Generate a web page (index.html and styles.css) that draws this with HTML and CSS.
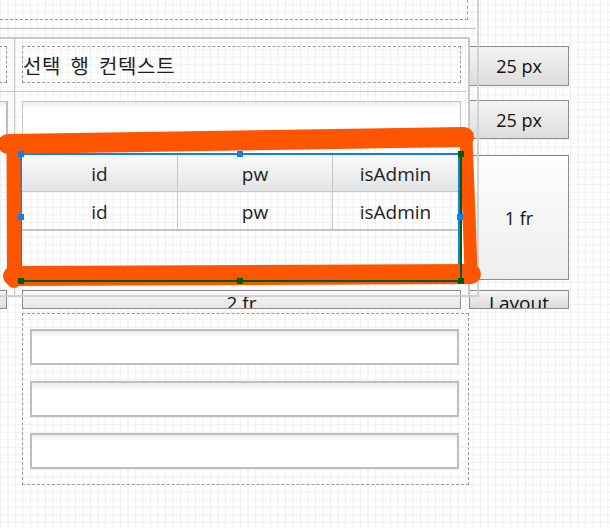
FILE: index.html
```html
<!DOCTYPE html>
<html lang="ko">
<head>
<meta charset="utf-8">
<title>Grid designer</title>
<link rel="stylesheet" href="styles.css">
</head>
<body>
<div class="canvas">
  <div class="layout">
    <div class="top-dashed"></div>

    <div class="left-dashed r3"></div>
    <div class="caption r3">선택 행 컨텍스트</div>
    <div class="btn size-btn r3">25 px</div>

    <div class="left-textbox r5"></div>
    <div class="textbox wide r5"></div>
    <div class="btn size-btn r5">25 px</div>

    <div class="datagrid r7">
      <div class="dg-row dg-head">
        <div class="dg-cell c1">id</div>
        <div class="dg-cell c2">pw</div>
        <div class="dg-cell c3">isAdmin</div>
      </div>
      <div class="dg-row dg-body">
        <div class="dg-cell c1">id</div>
        <div class="dg-cell c2">pw</div>
        <div class="dg-cell c3">isAdmin</div>
      </div>
    </div>
    <div class="btn fr-btn r7">1 fr</div>

    <div class="btn left-btn r9"></div>
    <div class="btn bar-btn wide r9">2 fr</div>
    <div class="btn bar-btn side r9">Layout</div>

    <div class="panel r11">
      <div class="textbox field"></div>
      <div class="textbox field"></div>
      <div class="textbox field"></div>
    </div>
  </div>

  <div class="guide h-outer-top"></div>
  <div class="guide v-outer"></div>
  <div class="guide h-grid-top"></div>
  <div class="guide v-grid-right"></div>
  <div class="guide h-grid-bottom"></div>
  <div class="guide v-col"></div>
  <div class="guide h-row"></div>

  <div class="sel-blue"></div>

  <svg class="marker" width="610" height="528" viewBox="0 0 610 528">
    <g fill="none" stroke="#fe5500" stroke-linecap="round" stroke-linejoin="round">
      <path d="M8 144 L464 137" stroke-width="20"/>
      <path d="M13.5 142 L14 281" stroke-width="14"/>
      <path d="M13 276 L471 274" stroke-width="20"/>
      <path d="M466 140 C468 190 470 235 471 275" stroke-width="13"/>
    </g>
  </svg>

  <div class="sel-green"></div>
  <div class="handle blue h-tl"></div>
  <div class="handle blue h-tm"></div>
  <div class="handle blue h-ml"></div>
  <div class="handle blue h-mr"></div>
  <div class="handle green h-tr"></div>
  <div class="handle green h-bl"></div>
  <div class="handle green h-bm"></div>
  <div class="handle green h-br"></div>
</div>
</body>
</html>
```

FILE: styles.css
```css
html, body {
  margin: 0;
  padding: 0;
}
body {
  width: 610px;
  height: 528px;
  overflow: hidden;
  background-color: #ffffff;
  background-image:
    linear-gradient(to right, #efefef 1px, transparent 1px),
    linear-gradient(to bottom, #efefef 1px, transparent 1px);
  background-size: 7.5px 7.5px;
  background-position: 0 4.3px;
  font-family: "Open Sans", "Noto Sans", sans-serif;
  color: #1a1a1a;
}
.canvas {
  position: relative;
  width: 610px;
  height: 528px;
  overflow: hidden;
}
.layout {
  display: grid;
  grid-template-columns: 8px 14px 439px 8px 100px;
  grid-template-rows: 20px 26px 40px 14px 39px 16px 125px 10px 19px 4px 172px;
}
.r3 { grid-row: 3; }
.r5 { grid-row: 5; }
.r7 { grid-row: 7; }
.r9 { grid-row: 9; }
.r11 { grid-row: 11; }

.top-dashed {
  grid-row: 1;
  grid-column: 1 / 5;
  margin-left: -10px;
  margin-right: 1px;
  border: 1px dashed #9a9a9a;
  border-top: none;
  box-sizing: border-box;
}

.left-dashed {
  grid-column: 1;
  margin-left: -20px;
  margin-right: 1px;
  height: 37px;
  border: 1px dashed #9a9a9a;
  box-sizing: border-box;
}
.caption {
  grid-column: 3;
  height: 37px;
  box-sizing: border-box;
  border: 1px dashed #9a9a9a;
  display: flex;
  align-items: center;
  font-family: "Noto Sans CJK KR", "Open Sans", sans-serif;
  font-size: 20px;
  letter-spacing: 0.7px;
  word-spacing: 3px;
  color: #1e1e1e;
  padding-top: 1px;
}

.btn {
  box-sizing: border-box;
  border: 1px solid #8c8c8c;
  background: linear-gradient(#f4f4f4, #dddddd);
  display: flex;
  align-items: center;
  justify-content: center;
  font-size: 18px;
  color: #111;
}
.size-btn {
  grid-column: 5;
}
.fr-btn {
  grid-column: 5;
  background: linear-gradient(#fefefe, #eeeeee);
}
.left-btn {
  grid-column: 1;
  margin-left: -20px;
  margin-right: 1px;
}
.bar-btn {
  align-items: flex-start;
  overflow: hidden;
  line-height: 19px;
  padding-top: 3px;
  font-size: 19px;
  background: linear-gradient(#fbfbfb, #e6e6e6);
}
.bar-btn.side {
  grid-column: 5;
  background: linear-gradient(#f4f4f4, #dcdcdc);
}
.wide {
  grid-column: 3;
}

.textbox {
  box-sizing: border-box;
  background: linear-gradient(#ececec, #ffffff 7px);
}
.textbox.wide {
  margin: 1px 0;
  border: 1px solid #c6c6c6;
}
.left-textbox {
  grid-column: 1;
  margin: 1px 0 1px -20px;
  border: 1px solid #c6c6c6;
  border-right: 2px solid #bdbdbd;
  background: linear-gradient(#ececec, #ffffff 7px);
}

.datagrid {
  grid-column: 3;
  margin-right: 3px;
  display: flex;
  flex-direction: column;
  font-size: 19px;
}
.dg-row {
  display: grid;
  grid-template-columns: 156px 155px 1fr;
}
.dg-head {
  height: 37px;
  box-sizing: border-box;
  background: linear-gradient(#fbfbfb, #e2e3e5);
  border-bottom: 1px solid #c8c8c8;
}
.dg-body {
  height: 39px;
  box-sizing: border-box;
  border-bottom: 2px solid #c5c5c5;
}
.dg-cell {
  display: flex;
  align-items: center;
  justify-content: center;
  color: #222;
  padding-top: 2px;
}
.dg-cell.c1, .dg-cell.c2 {
  border-right: 1px solid #c6c6c6;
}

.panel {
  grid-column: 3 / 5;
  box-sizing: border-box;
  border: 1px dashed #9a9a9a;
  padding: 15px 9px 0 7px;
  display: flex;
  flex-direction: column;
  gap: 16px;
}
.field {
  height: 36px;
  border: 2px solid #bdbdbd;
}

.guide {
  position: absolute;
  background: #c8c8c8;
}
.h-outer-top { left: 0; top: 28px; width: 476px; height: 1px; background: #c4c4c4; }
.v-outer { left: 477px; top: 0; width: 2px; height: 297px; background: #d2d2d2; }
.h-grid-top { left: 0; top: 37px; width: 470px; height: 2px; background: #c8c8c8; }
.v-grid-right { left: 468px; top: 37px; width: 2px; height: 258px; background: #c8c8c8; }
.h-grid-bottom { left: 0; top: 295px; width: 479px; height: 2px; background: #d0d0d0; }
.v-col { left: 14px; top: 39px; width: 1px; height: 256px; background: #c8c8c8; }
.h-row { left: 0; top: 91px; width: 466px; height: 1px; background: #c8c8c8; }

.sel-blue {
  position: absolute;
  left: 20px;
  top: 153px;
  width: 440px;
  height: 117px;
  box-sizing: border-box;
  border: 2px solid #0f7ff0;
  border-bottom: none;
}
.marker {
  position: absolute;
  left: 0;
  top: 0;
  pointer-events: none;
}
.sel-green {
  position: absolute;
  left: 20px;
  top: 153px;
  width: 442px;
  height: 129px;
  box-sizing: border-box;
  border: 2px solid #005a00;
  border-top: none;
  border-left-color: transparent;
}
.handle {
  position: absolute;
  width: 6px;
  height: 6px;
  box-sizing: border-box;
}
.handle.blue { background: #0f7ff0; }
.handle.green { background: #005a00; }
.h-tl { left: 18px; top: 151px; }
.h-tm { left: 237px; top: 151px; }
.h-ml { left: 18px; top: 214px; }
.h-mr { left: 457px; top: 214px; }
.h-tr { left: 458px; top: 151px; }
.h-bl { left: 18px; top: 278px; }
.h-bm { left: 237px; top: 278px; }
.h-br { left: 458px; top: 278px; }
```
